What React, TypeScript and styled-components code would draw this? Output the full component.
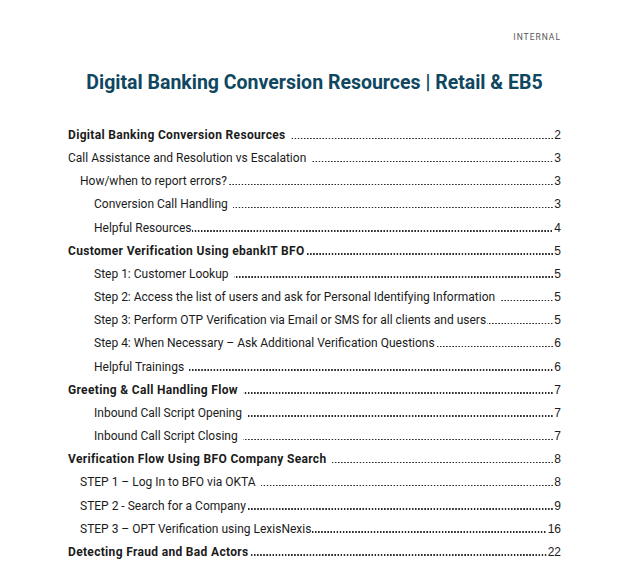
import React, { FC } from 'react';
import styled, { createGlobalStyle } from 'styled-components';

interface TocEntry {
  title: string;
  page: string;
  level: 1 | 2 | 3;
  bold?: boolean;
  spaced?: boolean;
}

const ENTRIES: TocEntry[] = [
  { title: 'Digital Banking Conversion Resources', page: '2', level: 1, bold: true, spaced: true },
  { title: 'Call Assistance and Resolution vs Escalation', page: '3', level: 1, spaced: true },
  { title: 'How/when to report errors?', page: '3', level: 2 },
  { title: 'Conversion Call Handling', page: '3', level: 3, spaced: true },
  { title: 'Helpful Resources', page: '4', level: 3 },
  { title: 'Customer Verification Using ebankIT BFO', page: '5', level: 1, bold: true },
  { title: 'Step 1: Customer Lookup', page: '5', level: 3, spaced: true },
  { title: 'Step 2: Access the list of users and ask for Personal Identifying Information', page: '5', level: 3, spaced: true },
  { title: 'Step 3: Perform OTP Verification via Email or SMS for all clients and users', page: '5', level: 3 },
  { title: 'Step 4: When Necessary – Ask Additional Verification Questions', page: '6', level: 3 },
  { title: 'Helpful Trainings', page: '6', level: 3, spaced: true },
  { title: 'Greeting & Call Handling Flow', page: '7', level: 1, bold: true, spaced: true },
  { title: 'Inbound Call Script Opening', page: '7', level: 3, spaced: true },
  { title: 'Inbound Call Script Closing', page: '7', level: 3, spaced: true },
  { title: 'Verification Flow Using BFO Company Search', page: '8', level: 1, bold: true, spaced: true },
  { title: 'STEP 1 – Log In to BFO via OKTA', page: '8', level: 2, spaced: true },
  { title: 'STEP 2 - Search for a Company', page: '9', level: 2 },
  { title: 'STEP 3 – OPT Verification using LexisNexis', page: '16', level: 2 },
  { title: 'Detecting Fraud and Bad Actors', page: '22', level: 1, bold: true },
];

const App: FC = () => {
  return (
    <>
      <SGlobal />
      <SPage>
        <SClassification>INTERNAL</SClassification>
        <STitle>Digital Banking Conversion Resources | Retail &amp; EB5</STitle>
        <STocList>
          {ENTRIES.map((entry) => (
            <STocRow key={entry.title} $level={entry.level} $bold={entry.bold}>
              <STocText $spaced={entry.spaced}>{entry.title}</STocText>
              <SLeader />
              <SPageNum>{entry.page}</SPageNum>
            </STocRow>
          ))}
        </STocList>
      </SPage>
    </>
  );
};

export default App;

const SGlobal = createGlobalStyle`
  html, body {
    margin: 0;
    padding: 0;
    background: #fff;
  }
  body {
    font-family: Roboto, 'Liberation Sans', sans-serif;
    color: #1b1b1b;
  }
`;

const SPage = styled.div`
  width: 636px;
  height: 577px;
  box-sizing: border-box;
  padding: 31px 75px 0 68px;
  overflow: hidden;
`;

const SClassification = styled.div`
  text-align: right;
  font-size: 8.5px;
  letter-spacing: 1px;
  color: #555;
  line-height: 12px;
`;

const STitle = styled.h1`
  margin: 27px 0 0;
  text-align: center;
  font-size: 19.5px;
  font-weight: 700;
  color: #0f4761;
  line-height: 26px;
`;

const STocList = styled.div`
  margin-top: 32px;
  display: flex;
  flex-direction: column;
`;

const STocRow = styled.div<{ $level: number; $bold?: boolean }>`
  display: flex;
  align-items: baseline;
  height: 23.17px;
  padding-left: ${({ $level }) => ($level === 1 ? 0 : $level === 2 ? 12 : 26)}px;
  font-size: 12px;
  font-weight: ${({ $bold }) => ($bold ? 700 : 400)};
  letter-spacing: ${({ $bold }) => ($bold ? 0.33 : 0)}px;
  white-space: nowrap;
`;

const STocText = styled.span<{ $spaced?: boolean }>`
  flex: none;
  padding-right: ${({ $spaced }) => ($spaced ? 5 : 1)}px;
`;

const SLeader = styled.span`
  flex: 1;
  min-width: 0;
  height: 1.5px;
  margin-right: 1px;
  background-image: radial-gradient(circle, #2a2a2a 0.6px, transparent 0.95px);
  background-size: 3.1px 1.5px;
  background-repeat: repeat-x;
  background-position: right bottom;
`;

const SPageNum = styled.span`
  flex: none;
  font-weight: 400;
  letter-spacing: 0;
  font-family: 'Liberation Sans', sans-serif;
  font-size: 12px;
`;
